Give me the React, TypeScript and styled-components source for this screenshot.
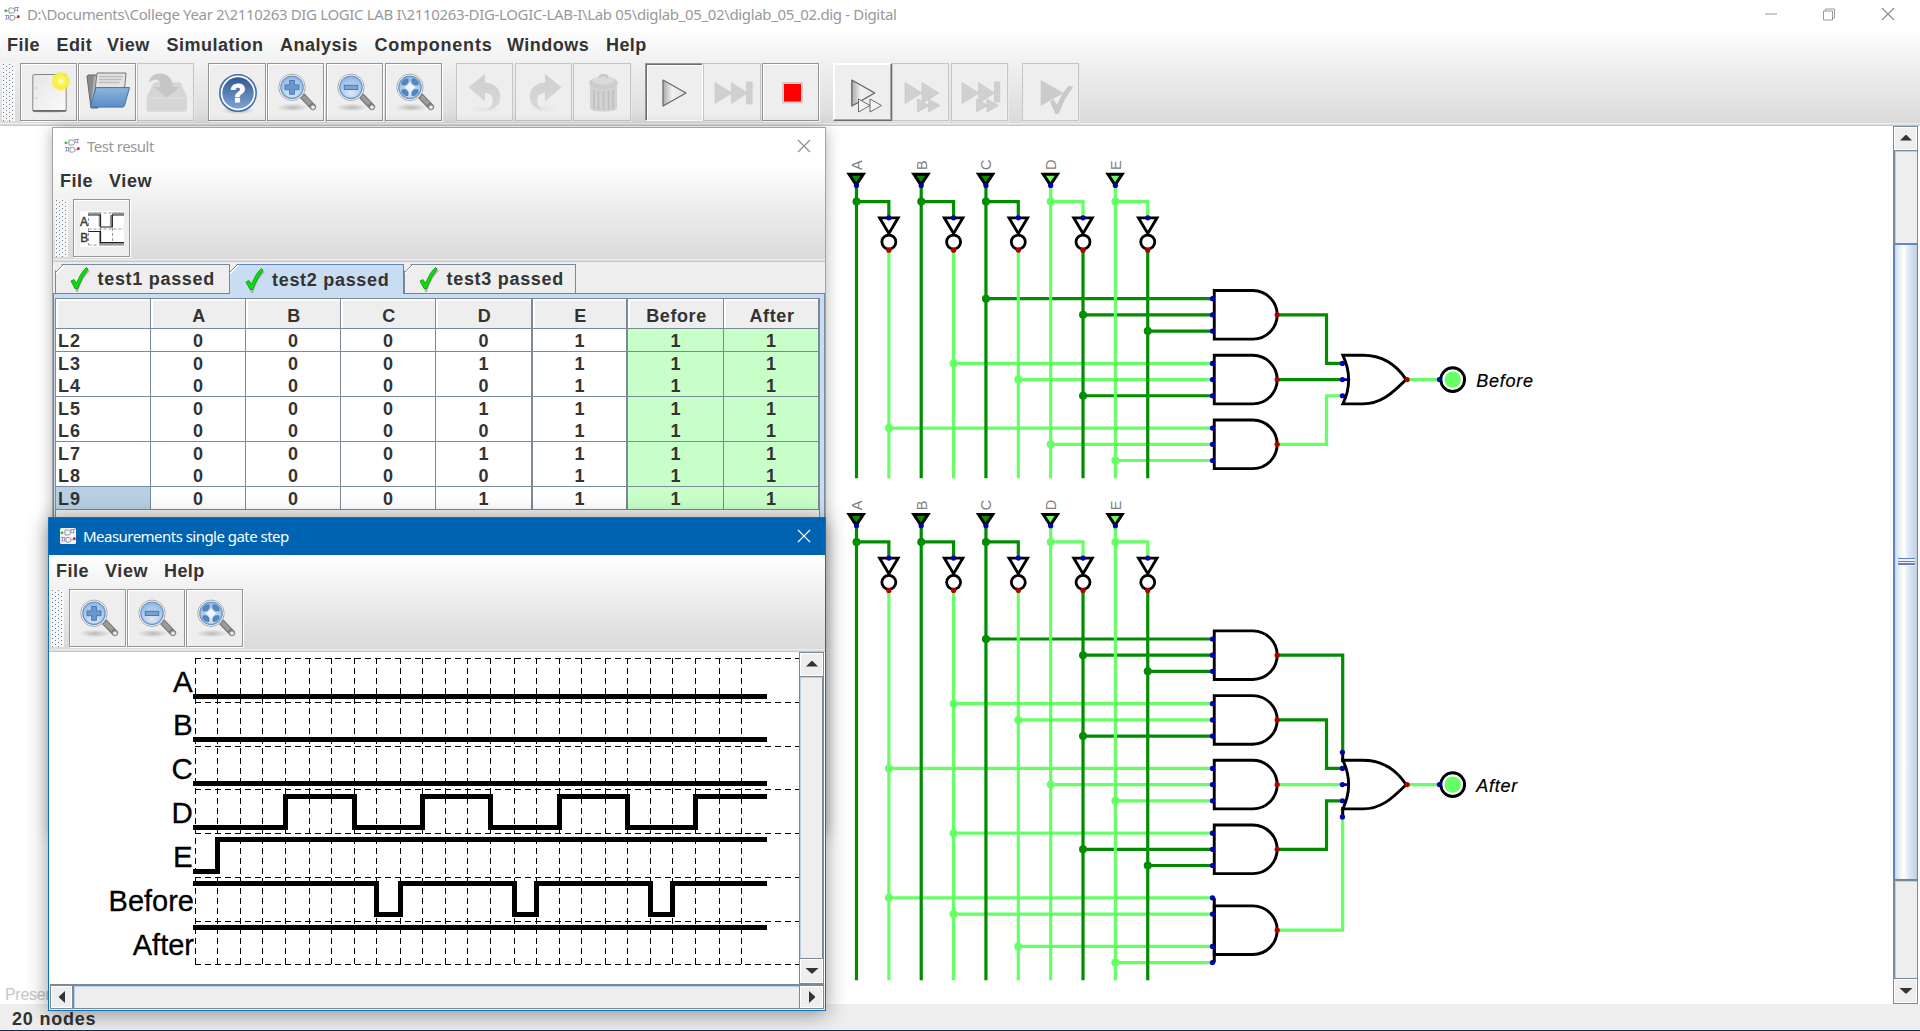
import React from "react";
import styled, { createGlobalStyle, css } from "styled-components";

const GlobalStyle = createGlobalStyle`
  html, body { margin: 0; padding: 0; background: #fff; }
  * { box-sizing: border-box; }
  svg { display: block; flex: none; }
`;

const UI = '"Liberation Sans", Arial, sans-serif';
const TITLE = '"Noto Sans", "Open Sans", sans-serif';
const LINE = "#7a8a99";
const DARK = "#008e00";
const LIGHT = "#66ff66";

const Desktop = styled.div`
  position: relative;
  display: flex;
  flex-direction: column;
  width: 1920px;
  height: 1031px;
  overflow: hidden;
  background: #fff;
  color: #333;
  font: bold 18px ${UI};
`;

const TitleBar = styled.div<{ $h: number; $pad: string; $active?: boolean }>`
  display: flex;
  align-items: center;
  flex: none;
  height: ${(p) => p.$h}px;
  padding: ${(p) => p.$pad};
  background: ${(p) => (p.$active ? "#0063b1" : "#fff")};
  color: ${(p) => (p.$active ? "#fff" : "#999")};
`;

const TitleText = styled.span<{ $ls: number }>`
  flex: 1;
  margin-left: 7px;
  font: 400 15px/20px ${TITLE};
  letter-spacing: ${(p) => p.$ls}px;
  white-space: pre;
`;

const WindowControls = styled.div`
  display: flex;
  gap: 46px;
`;

const Chrome = styled.div<{ $h: number }>`
  display: flex;
  flex-direction: column;
  flex: none;
  height: ${(p) => p.$h}px;
  background: linear-gradient(#fff, #f3f3f3 30%, #dadada);
`;

const ChromeEdge = styled.div`
  flex: none;
  height: 3px;
  background: linear-gradient(#eee 0 1px, #dcdcdc 1px 2px, #c8c8c8 2px 3px);
`;

const MenuBar = styled.div<{ $h: number; $pad: string }>`
  display: flex;
  flex: none;
  height: ${(p) => p.$h}px;
  padding: ${(p) => p.$pad};
`;

const MenuItem = styled.span<{ $w: number; $ls?: number }>`
  flex: none;
  width: ${(p) => p.$w}px;
  line-height: 30px;
  letter-spacing: ${(p) => p.$ls ?? 0.6}px;
  white-space: nowrap;
`;

const ToolBar = styled.div<{ $pad: string }>`
  display: flex;
  flex: none;
  padding: ${(p) => p.$pad};
`;

const Grip = styled.div`
  flex: none;
  width: 13px;
  height: 58px;
  margin-right: 5px;
  background-color: #f6f6f6;
  background-image: radial-gradient(circle at 0.5px 0.5px, #6c7d90 0.8px, transparent 0.9px),
    radial-gradient(circle at 0.5px 0.5px, #6c7d90 0.8px, transparent 0.9px);
  background-size: 6px 4px;
  background-position: 1px 1px, 4px 3px;
`;

const Group = styled.div<{ $w: number }>`
  display: flex;
  flex: none;
  width: ${(p) => p.$w}px;
`;

type Look = "on" | "off" | "pressed" | "raised";
const looks = {
  on: css`
    border: 1px solid #959595;
    box-shadow: inset 1px 1px #fff, 1px 1px #fff;
  `,
  off: css`
    border: 1px solid #c6c6c6;
    box-shadow: 1px 1px #e9e9e9;
  `,
  pressed: css`
    border: 1px solid;
    border-color: #959595 #fff #fff #959595;
    box-shadow: inset 1px 1px #6e6e6e, inset 2px 2px #fff;
  `,
  raised: css`
    border: 1px solid;
    border-color: #fff #6e6e6e #6e6e6e #fff;
    box-shadow: inset -1px -1px #a8a8a8, inset 1px 1px #fff;
  `,
};

const ToolButton = styled.button<{ $look: Look; $w?: number; $after?: number }>`
  display: flex;
  align-items: flex-start;
  justify-content: flex-start;
  flex: none;
  width: ${(p) => p.$w ?? 57}px;
  height: 58px;
  margin: 0 ${(p) => p.$after ?? 1}px 0 0;
  padding: 0;
  background: #eee;
  ${(p) => looks[p.$look]}
  & > svg { margin: -1px; }
`;

const View = styled.div`
  display: flex;
  flex: none;
  height: 878px;
`;

const StatusBar = styled.div`
  flex: none;
  height: 27px;
  padding-left: 12px;
  border-bottom: 1px solid #14304e;
  background: #eee;
  line-height: 30px;
  letter-spacing: 0.8px;
`;

const FloatingWindow = styled.section<{ $x: number; $y: number; $w: number; $h: number; $active?: boolean }>`
  position: absolute;
  left: ${(p) => p.$x}px;
  top: ${(p) => p.$y}px;
  display: flex;
  flex-direction: column;
  width: ${(p) => p.$w}px;
  height: ${(p) => p.$h}px;
  border: 1px solid ${(p) => (p.$active ? "#1170bb" : "#a4a4a4")};
  background: #eee;
  box-shadow: ${(p) => (p.$active ? "0 3px 20px rgba(0,0,0,.42)" : "0 2px 14px rgba(0,0,0,.3)")};
`;

/* ---------- scroll bars ---------- */

const VBar = styled.div`
  display: flex;
  flex-direction: column;
  flex: none;
  width: 25px;
  border: 1px solid ${LINE};
  background: #eee;
`;

const ScrollButton = styled.div<{ $w: number; $h: number }>`
  display: flex;
  align-items: center;
  justify-content: center;
  flex: none;
  width: ${(p) => p.$w}px;
  height: ${(p) => p.$h}px;
  background: #eee;
  box-shadow: inset 1px 1px #fff, inset -1px -1px #fff;
`;

const VTrack = styled.div<{ $h?: number; $thick: "left" | "right" }>`
  flex: ${(p) => (p.$h ? "none" : 1)};
  height: ${(p) => (p.$h ? p.$h + "px" : "auto")};
  border-top: 1px solid ${LINE};
  border-bottom: 1px solid ${LINE};
  border-${(p) => p.$thick}: 1px solid ${LINE};
  box-shadow: inset 1px 1px #b8cfe5;
`;

const Thumb = styled.div`
  display: flex;
  align-items: center;
  justify-content: center;
  flex: none;
  height: 636px;
  margin: 0 -1px;
  border: 1px solid #6382bf;
  border-left-width: 2px;
  background: linear-gradient(90deg, #c8d8ea 0 1px, #dde8f3 2px, #fff 9px, #dde8f3 14px, #bdd1e6);
`;

const ThumbGrip = styled.div`
  width: 17px;
  height: 8px;
  background: repeating-linear-gradient(#6382bf 0 1.4px, #e8f0f8 1.4px 2.7px);
`;

const HBar = styled.div`
  display: flex;
  flex: none;
  width: 774px;
  height: 25px;
  margin-left: 1px;
  border: 1px solid ${LINE};
  border-top-width: 2px;
  background: #eee;
`;

const HTrack = styled.div`
  flex: 1;
  border: solid ${LINE};
  border-width: 0 1px 0 2px;
  box-shadow: inset 1px 1px #b8cfe5;
`;

const arrows = {
  up: "M1 8.5 L6.5 3 H7.5 L13 8.5 Z",
  down: "M0.5 4 H13.5 L7.5 9.5 H6.5 Z",
  left: "M10 1 V13 L4 7.5 V6.5 Z",
  right: "M4 1 V13 L10 7.5 V6.5 Z",
};
const Arrow = ({ dir }: { dir: keyof typeof arrows }) => (
  <svg width="14" height="14" viewBox="0 0 14 14"><path d={arrows[dir]} fill="#333" /></svg>
);

/* ---------- tabs and table ---------- */

const TabRow = styled.div`
  display: flex;
  flex: none;
  height: 31px;
  padding: 2px 0 0 2px;
`;

const Tab = styled.div<{ $w: number; $on?: boolean }>`
  display: flex;
  align-items: center;
  flex: none;
  width: ${(p) => p.$w}px;
  height: ${(p) => (p.$on ? 30 : 29)}px;
  padding-left: ${(p) => (p.$on ? 14.5 : 14)}px;
  border: 1px solid ${(p) => (p.$on ? "#6382bf" : LINE)};
  border-width: 1px 1px 0 ${(p) => (p.$on ? 0 : 1)}px;
  background: linear-gradient(135deg, #eee 0 4.6px, ${(p) => (p.$on ? "#6382bf" : LINE)} 4.6px 5.6px,
    #fff 5.6px 6.6px, ${(p) => (p.$on ? "#c8ddf2" : "#eee")} 6.6px);
  letter-spacing: 0.7px;
  white-space: nowrap;
  clip-path: polygon(0 7px, 7px 0, 100% 0, 100% 100%, 0 100%);
`;

const TabLabel = styled.span`
  margin-left: 7.5px;
  line-height: 30px;
`;

const TabPane = styled.div`
  flex: 1;
  display: flex;
  flex-direction: column;
  padding: 4px 4px 4px 1px;
  border: 1px solid #6382bf;
  border-right-color: ${LINE};
  background: #c8ddf2;
`;

const Table = styled.div`
  flex: 1;
  width: 765px;
  border: solid ${LINE};
  border-width: 1px 0 0 1px;
  background: #eee;
  border-right: 1px solid ${LINE};
`;

const Row = styled.div<{ $h: number }>`
  display: grid;
  grid-template-columns: 95px 95px 95px 95px 97px 95px 96px 95px;
  height: ${(p) => p.$h}px;
`;

const Cell = styled.div<{ $bg?: string; $thick?: boolean; $left?: boolean; $head?: boolean }>`
  display: flex;
  align-items: center;
  justify-content: ${(p) => (p.$left ? "flex-start" : "center")};
  padding: ${(p) => (p.$head ? "5px 0 0 2px" : p.$left ? "2px 0 0 2px" : "2px 0 0")};
  border: solid ${LINE};
  border-width: 0 ${(p) => (p.$thick ? 2 : 1)}px 1px 0;
  background: ${(p) => p.$bg ?? "#fff"};
  box-shadow: ${(p) => (p.$head ? "inset 2px 2px #fff" : "none")};
  letter-spacing: ${(p) => (p.$head ? 0.6 : p.$left ? 1 : 0)}px;
  line-height: 20px;
`;

const MeasureBody = styled.div`
  display: flex;
  flex: none;
  height: 332px;
  background: #fff;
`;

/* ---------- icons ---------- */

const AppIcon = ({ plate }: { plate?: boolean }) => (
  <svg width="16" height="16" viewBox="0 0 16 16" fill="none">
    {plate && <rect width="16" height="16" rx="1.5" fill="#f4f4f6" />}
    <path d="M5 2h3.2a2.3 2.3 0 0 1 0 5H5zM6 9.5h2.8a2.3 2.3 0 0 1 0 4.6H6z" stroke="#9a9aa2" />
    <path d="M1 4.8h4M10.5 4.4h4M1 13h4M10.5 11.8h4" stroke="#aab" />
    <path d="M11 2v3M13.5 1.5v4M2.5 9v4M4.5 9v4" stroke="#9c96d8" />
    <path d="M10.5 1.5h4.5M1 9.5h4" stroke="#999" />
    <circle cx="1.8" cy="4.8" r="1.4" fill="#2cc43c" />
    <circle cx="14.3" cy="10.7" r="1.4" fill="#e60a12" />
  </svg>
);

const CloseIcon = ({ color }: { color: string }) => (
  <svg width="14" height="14" viewBox="0 0 14 14"><path d="M1 1L13 13M13 1L1 13" stroke={color} strokeWidth="1.1" /></svg>
);

const Icon = ({ children }: { children: React.ReactNode }) => (
  <svg width="58" height="58" viewBox="0 0 58 58">{children}</svg>
);

const Defs = () => (
  <svg width="0" height="0" style={{ position: "absolute" }}>
    <defs>
      <radialGradient id="sun"><stop offset="0" stopColor="#fff" /><stop offset=".3" stopColor="#fbf56b" /><stop offset=".75" stopColor="#f7ee3a" /><stop offset="1" stopColor="#f7ee3a" stopOpacity="0" /></radialGradient>
      <linearGradient id="paper" x1="0" y1="0" x2="1" y2="1"><stop offset="0" stopColor="#e6e6e6" /><stop offset="1" stopColor="#fafafa" /></linearGradient>
      <linearGradient id="folder" x1="0" y1="0" x2="0" y2="1"><stop offset="0" stopColor="#8db4dc" /><stop offset="1" stopColor="#5b8dc6" /></linearGradient>
      <linearGradient id="blue" x1="0" y1="0" x2="0" y2="1"><stop offset="0" stopColor="#2f5a98" /><stop offset="1" stopColor="#7fa4d2" /></linearGradient>
      <radialGradient id="lens" cx=".5" cy=".75" r=".8"><stop offset="0" stopColor="#dce9f6" /><stop offset="1" stopColor="#88b2e0" /></radialGradient>
      <radialGradient id="shade"><stop offset="0" stopColor="#000" stopOpacity=".22" /><stop offset="1" stopColor="#000" stopOpacity="0" /></radialGradient>
      <linearGradient id="metal"><stop offset="0" stopColor="#a8aaa6" /><stop offset=".4" stopColor="#f2f3f0" /><stop offset="1" stopColor="#dfe0dc" /></linearGradient>
      <linearGradient id="dim" x1="0" y1="0" x2="0" y2="1"><stop offset="0" stopColor="#cfcfcf" /><stop offset="1" stopColor="#d8d8d8" /></linearGradient>
    </defs>
  </svg>
);

const NewIcon = () => (
  <Icon>
    <ellipse cx="29" cy="48" rx="20" ry="2.5" fill="url(#shade)" />
    <rect x="12.8" y="11.5" width="33.4" height="37" rx="1.5" fill="url(#paper)" stroke="#858585" />
    <path d="M46 47.8H13" stroke="#6b6b6b" strokeWidth="1.4" />
    <circle cx="16.5" cy="25" r="1" fill="#ccc" /><circle cx="16.5" cy="35" r="1" fill="#ccc" />
    <circle cx="40.7" cy="18.3" r="10" fill="url(#sun)" />
  </Icon>
);

const OpenIcon = () => (
  <Icon>
    <path d="M9 13.5l1-1.5h8l2 3v30h-7z" fill="#8a8a8a" stroke="#666" />
    <path d="M13 44l3-31h3l-1 31z" fill="#b5b5b5" />
    <path d="M19 10h29l-1.5 16-31 14z" fill="#e4e4e4" stroke="#777" />
    <path d="M21 13.5h24M21 16.5h23M20.5 19.5h21" stroke="#bdbdbd" strokeWidth="1.4" />
    <path d="M18 24.6H51.5L46.5 42.5q-.4 1.6-2 1.6H13.5q-1.3 0-1-1.2z" fill="url(#folder)" stroke="#3f72b0" />
  </Icon>
);

const SaveIcon = () => (
  <Icon>
    <path d="M18.5 19.3H42q1.5 0 2.3 2L50 34v12.5q0 2.3-2.3 2.3H12q-2.3 0-2.3-2.3V34l6.3-12.7q.8-2 2.5-2z" fill="#d6d6d6" />
    <path d="M10.5 35H49.5" stroke="#dedede" strokeWidth="1.5" />
    <path d="M12 20q1-9.500 11-9.500 11.500 0 13 13.500h7L30 34.500 16.500 24h7q0-7-4.500-7.500-4 0-7 3.500z" fill="#c6c6c6" />
  </Icon>
);

const HelpIcon = () => (
  <Icon>
    <ellipse cx="30" cy="47.5" rx="17" ry="4" fill="url(#shade)" />
    <circle cx="30" cy="30" r="18.2" fill="#fff" stroke="#446ba6" strokeWidth="1.6" />
    <circle cx="30" cy="30" r="15.7" fill="url(#blue)" />
    <text x="30" y="38.5" textAnchor="middle" fontFamily="Liberation Sans, sans-serif" fontWeight="700" fontSize="25" fill="#fff" stroke="#fff" strokeWidth="1.2">?</text>
  </Icon>
);

const ZoomIcon = ({ kind }: { kind: "in" | "out" | "fit" }) => (
  <Icon>
    <ellipse cx="26" cy="44.5" rx="16" ry="4" fill="url(#shade)" />
    <path d="M35.5 33L46 44" stroke="#777" strokeWidth="6.2" strokeLinecap="round" />
    <path d="M36 33.5L43.500 41" stroke="#9b9b98" strokeWidth="4" />
    <circle cx="46" cy="44.2" r="2.300" fill="#eee" stroke="#8a8a8a" />
    <circle cx="25" cy="24.300" r="13.200" fill="#fff" stroke="#a9aaa6" />
    <circle cx="25" cy="24.300" r="11.200" fill="url(#lens)" stroke="#6d97cb" strokeWidth="1.300" />
    {kind === "in" && <path d="M22.600 17.500h4.800v4.400h4.600v4.800h-4.600v4.600h-4.800v-4.600h-4.600v-4.800h4.600z" fill="#6d97cc" stroke="#467ab8" />}
    {kind === "out" && <rect x="18.300" y="22.300" width="13.400" height="4.200" fill="#7ba2d3" stroke="#467ab8" />}
    {kind === "fit" && (
      <g>
        <path d="M17 21.800V19.300Q18.300 17 20.500 16H23V19.500L21 21.800ZM33 21.800V19.300Q31.700 17 29.500 16H27V19.500L29 21.800ZM17 26.800V29.300Q18.300 31.600 20.500 32.600H23V29.100L21 26.800ZM33 26.800V29.300Q31.700 31.600 29.500 32.600H27V29.100L29 26.800Z" fill="#5685c0" stroke="#467ab8" strokeWidth=".8" />
        <path d="M25 18.800l2 3 3.500 2.500-3.500 2.500-2 3-2-3-3.500-2.500 3.500-2.500z" fill="#eef5fc" />
      </g>
    )}
  </Icon>
);

const UndoIcon = ({ flip }: { flip?: boolean }) => (
  <Icon>
    <ellipse cx="29" cy="46" rx="16" ry="4" fill="url(#shade)" opacity=".2" />
    <g transform={flip ? "translate(59 0) scale(-1 1)" : undefined}>
      <path d="M12.6 24.3L29 11v8.5Q44.5 21 44.3 35 43.5 45 31 47.2 38 42 36.5 35.5 35.5 30 29 30v8.7z" fill="url(#dim)" />
    </g>
  </Icon>
);

const TrashIcon = () => (
  <Icon>
    <path d="M17 23V45q0 3.5 13.5 3.5T44 45V23z" fill="#d2d2d2" />
    <path d="M21 27v19M25.5 28v19M30.5 28v19M35.5 28v19M40 27v19" stroke="#bfbfbf" strokeWidth="1.6" />
    <ellipse cx="30.5" cy="20" rx="14.3" ry="6.5" fill="#cdcdcd" />
    <ellipse cx="30.5" cy="17.5" rx="11" ry="4" fill="#dadada" />
    <path d="M26.5 15q0-3 4-3t4 3" fill="none" stroke="#c4c4c4" strokeWidth="2" />
  </Icon>
);

const tri = (x: number, y: number, w: number, h: number) => `M${x} ${y}L${x + w} ${y + h / 2}L${x} ${y + h}Z`;

const PlayIcon = () => (
  <Icon><path d={tri(18, 17, 23, 26)} fill="url(#metal)" stroke="#666" strokeWidth="1.2" strokeLinejoin="round" /></Icon>
);
const StepIcon = () => (
  <Icon><path d={tri(12, 19.5, 17, 21) + tri(28.5, 19.5, 16, 21) + "M43.5 19h5.7v22h-5.7z"} fill="#d0d0d0" stroke="#c6c6c6" strokeWidth=".6" /></Icon>
);
const StopIcon = () => (
  <Icon><rect x="21" y="20" width="19" height="19.5" fill="red" stroke="#d2cdcd" strokeWidth="2" /></Icon>
);
const FastIcon = () => (
  <Icon>
    <g fill="url(#metal)" stroke="#5f5f5f" strokeLinejoin="round">
      <path d={tri(18.8, 17, 23, 26)} strokeWidth="1.2" />
      <path d={tri(25.5, 36, 11.5, 13) + tri(37, 36, 11.5, 13)} fill="#f3f3f1" strokeWidth=".9" />
    </g>
  </Icon>
);
const NextIcon = () => (
  <Icon>
    <g fill="#d0d0d0" stroke="#c4c4c4" strokeWidth=".6">
      <path d={tri(13, 19.5, 17, 21) + tri(30, 19.5, 17, 21)} />
      <path d={tri(25.5, 36, 11.5, 13) + tri(36.5, 36, 11.5, 13)} />
    </g>
  </Icon>
);
const EndIcon = () => (
  <Icon>
    <g fill="#d0d0d0" stroke="#c4c4c4" strokeWidth=".6">
      <path d={tri(11, 19.5, 17, 21) + tri(27.5, 19.5, 16, 21) + "M43.5 19h5.3v20h-5.3z"} />
      <path d={tri(25.5, 36, 11.5, 13) + tri(36, 36, 11.5, 13)} />
    </g>
  </Icon>
);
const CheckRunIcon = () => (
  <Icon>
    <path d={tri(18.7, 17, 23, 26)} fill="#cbcbcb" />
    <path d="M28.5 38.5l3-1.5 3.5 5.5q5-12 12-19.5l3.5 1.5Q42.5 34 36.5 50.5h-3z" fill="#c9c9c9" stroke="#bdbdbd" strokeWidth=".6" />
  </Icon>
);

const WaveIcon = () => (
  <Icon>
    <rect x="7" y="12" width="44" height="36" fill="#fff" />
    <path d="M15.5 14H51M15.5 30H51M15.5 46H51M39.5 14V46M15.5 14v32M27.5 14v32" stroke="#999" strokeDasharray="3 2" fill="none" />
    <path d="M15.5 14.5H27.8M39 14.5H51M26.7 16V27.5M38 16V27.5M27 32.5V45M27 45.3H51" stroke="#9c9c9c" strokeWidth="2.2" fill="none" />
    <path d="M15.3 16H27.5V28H39.3V16H51M15.3 32.5H27.5V43.7H51" stroke="#222" strokeWidth="1.2" fill="none" />
    <g fontFamily="Liberation Sans, sans-serif" fontSize="12" fontWeight="400" fill="#333" stroke="#333" strokeWidth=".4"><text x="7" y="26.5">A</text><text x="7.2" y="42.5">B</text></g>
  </Icon>
);

const PassIcon = () => (
  <svg width="20" height="26" viewBox="0 0 20 26">
    <path d="M3 15.5q2 2 3.3 6Q10 10 17.5 3" fill="none" stroke="#777" strokeWidth="4" opacity=".5" transform="translate(.8 .8)" />
    <path d="M1 15l3-1.5 2.5 4Q11 6 16.5 1.5L18 3Q12 11 7.6 22.5H5z" fill="#0be00b" stroke="#079507" strokeWidth=".8" />
  </svg>
);

/* ---------- circuit ---------- */

const U = 16.18;
const X = (n: number) => 856.5 + n * U;

type Wire = [row: number, col: number];
const isDark = (col: number) => [0, 4, 8, 14, 18].includes(col);
const tone = (dark: boolean) => (dark ? DARK : LIGHT);

const Pin = ({ x, y, out }: { x: number; y: number; out?: boolean }) => (
  <circle cx={x} cy={y} r="2.6" fill={out ? "#b20000" : "#0000b2"} />
);

interface CircuitProps {
  top: number;
  end: number;
  taps: Wire[];
  gates: { row: number; pins: number[]; dark: boolean; via?: number; to: number }[];
  orRow: number;
  wide?: boolean;
  label: string;
}

const Circuit = ({ top, end, taps, gates, orRow, wide, label }: CircuitProps) => {
  const Y = (n: number) => top + n * U;
  const oy = Y(orRow);
  return (
    <g fill="none" strokeWidth="3.2">
      {taps.map(([r, c], i) => (
        <path key={i} d={`M${X(c)} ${Y(r)}H${X(22)}`} stroke={tone(isDark(c))} />
      ))}
      {gates.map((g, i) => (
        <path key={i} d={`M${X(26)} ${Y(g.row)}${g.via ? `H${X(g.via) + 0.8}V${Y(g.to)}` : ""}${g.via === 30 ? "" : `H${X(30)}`}`} stroke={tone(g.dark)} />
      ))}
      <path d={`M${X(34)} ${oy}H${X(36)}`} stroke={LIGHT} />
      {["A", "B", "C", "D", "E"].map((name, i) => {
        const x = X(i * 4);
        const nx = X(i * 4 + 2);
        const low = i < 3;
        return (
          <g key={name}>
            <path d={`M${x} ${Y(-1)}V${Y(end)}M${x} ${Y(0)}H${nx}V${Y(1)}`} stroke={tone(low)} strokeLinecap="square" />
            <path d={`M${nx} ${Y(3)}V${Y(end)}`} stroke={tone(!low)} strokeLinecap="square" />
            <path d={`M${x - 7.4} ${Y(-1) - 11.2}H${x + 6.8}L${x - 0.3} ${Y(-1) - 0.5}Z`} fill={tone(low)} stroke="#000" strokeWidth="3" />
            <path d={`M${nx - 9.3} ${Y(1)}H${nx + 9.3}L${nx} ${Y(2) - 0.5}Z`} fill="#fff" stroke="#000" strokeWidth="2.8" />
            <circle cx={nx} cy={Y(2.5)} r="7" fill="#fff" stroke="#000" strokeWidth="2.8" />
            <circle cx={x} cy={Y(0)} r="4" fill={tone(low)} />
            <Pin x={x} y={Y(-1)} />
            <Pin x={nx} y={Y(1)} />
            <Pin x={nx} y={Y(3)} out />
            <text transform={`translate(${x + 5.3} ${Y(-1) - 15.4}) rotate(-90)`} fill="#808080" fontFamily="Liberation Sans, sans-serif" fontWeight="400" fontSize="14.5">{name}</text>
          </g>
        );
      })}
      {taps.map(([r, c], i) => (
        <circle key={i} cx={X(c)} cy={Y(r)} r="4" fill={tone(isDark(c))} />
      ))}
      {gates.map((g, i) => {
        const y = Y(g.row);
        const x = X(22) + 1.8;
        return (
          <g key={i}>
            <path d={`M${x} ${y - 24.3}H${X(24.5)}C${X(24.5) + 13.4} ${y - 24.3} ${X(26)} ${y - 13.4} ${X(26)} ${y}C${X(26)} ${y + 13.4} ${X(24.5) + 13.4} ${y + 24.3} ${X(24.5)} ${y + 24.3}H${x}Z`} stroke="#000" strokeWidth="2.9" />
            {g.pins.length > 3 && <path d={`M${x} ${y - 2 * U}V${y + 2 * U}`} stroke="#000" strokeWidth="3" />}
            {g.pins.map((p) => <Pin key={p} x={X(22)} y={Y(p)} />)}
            <Pin x={X(26)} y={y} out />
          </g>
        );
      })}
      <path d={`M${X(30)} ${oy}h7M${X(30)} ${oy - U}h4M${X(30)} ${oy + U}h4`} stroke="#0000b2" strokeWidth="2.6" />
      <path d={`M${X(30) + 1} ${oy - 24.3}H${X(31.3)}C${X(32.5)} ${oy - 24.3} ${X(33.4)} ${oy - 14} ${X(34) - 0.5} ${oy}C${X(33.2)} ${oy + 12} ${X(32.5)} ${oy + 24.3} ${X(31.3)} ${oy + 24.3}H${X(30) + 1}Q${X(30) + 12.5} ${oy} ${X(30) + 1} ${oy - 24.3}Z`} stroke="#000" strokeWidth="2.9" />
      {wide && <path d={`M${X(30) + 0.8} ${oy - 2 * U}v10M${X(30) + 0.8} ${oy + 2 * U}v-10`} stroke="#000" strokeWidth="3" />}
      {(wide ? [-2, -1, 0, 1, 2] : [-1, 0, 1]).map((p) => <Pin key={p} x={X(30) + 0.5} y={oy + p * U} />)}
      <Pin x={X(34) + 0.5} y={oy} out />
      <circle cx="1452.7" cy={oy} r="11.9" fill="#fff" stroke="#000" strokeWidth="2.9" />
      <circle cx="1452.7" cy={oy} r="8.2" fill={LIGHT} />
      <Pin x={X(36) + 0.5} y={oy} />
      <text x="1476.3" y={oy + 7.6} fill="#000" stroke="#000" strokeWidth=".2" fontFamily="Liberation Sans, sans-serif" fontStyle="italic" fontWeight="400" fontSize="18" letterSpacing=".75">{label}</text>
    </g>
  );
};

const baseTaps: Wire[] = [[6, 8], [7, 14], [8, 18], [10, 6], [11, 10], [12, 14], [14, 2], [15, 12], [16, 16]];

const Schematic = () => (
  <svg width="1893" height="878" viewBox="0 126 1893 878">
    <text x="5" y="1000" fill="#c6c6c6" fontFamily="Liberation Sans, sans-serif" fontWeight="400" fontSize="16" letterSpacing="-.3">Present</text>
    <Circuit
      top={201.6}
      end={17}
      taps={baseTaps}
      gates={[
        { row: 7, pins: [6, 7, 8], dark: true, via: 29, to: 10 },
        { row: 11, pins: [10, 11, 12], dark: true, to: 11 },
        { row: 15, pins: [14, 15, 16], dark: false, via: 29, to: 12 },
      ]}
      orRow={11}
      label="Before"
    />
    <Circuit
      top={541.9}
      end={27}
      taps={[...baseTaps, [18, 6], [19, 14], [20, 18], [22, 2], [23, 6], [25, 10], [26, 16]]}
      gates={[
        { row: 7, pins: [6, 7, 8], dark: true, via: 30, to: 13 },
        { row: 11, pins: [10, 11, 12], dark: true, via: 29, to: 14 },
        { row: 15, pins: [14, 15, 16], dark: false, to: 15 },
        { row: 19, pins: [18, 19, 20], dark: true, via: 29, to: 16 },
        { row: 24, pins: [22, 23, 25, 26], dark: false, via: 30, to: 17 },
      ]}
      orRow={15}
      wide
      label="After"
    />
  </svg>
);

/* ---------- timing chart ---------- */

const gridX = [195, 217, 240, 262, 285, 309, 331, 354, 376, 400, 422, 445, 467, 490, 514, 536, 559, 581, 605, 627, 650, 672, 695, 719, 741];
const gridY = [658, 702, 746, 789, 833, 877, 921, 964];
const signals = [
  { name: "A", base: 691.5, d: "M193 696.5H767" },
  { name: "B", base: 735, d: "M193 739.5H767" },
  { name: "C", base: 779, d: "M193 783.5H767" },
  { name: "D", base: 822.5, d: "M193 827.5H285.5V796.5H354.5V827.5H422.5V796.5H490.5V827.5H559.5V796.5H627.5V827.5H695.5V796.5H767" },
  { name: "E", base: 866.5, d: "M193 871.5H217.5V839.5H767" },
  { name: "Before", base: 910.5, d: "M193 883.5H376.5V914.5H400.5V883.5H514.5V914.5H536.5V883.5H650.5V914.5H672.5V883.5H767" },
  { name: "After", base: 954.5, d: "M193 927.5H767" },
];

const Chart = () => (
  <svg width="750" height="332" viewBox="49 652 750 332" shapeRendering="crispEdges">
    <g stroke="#000" strokeDasharray="6 4">
      {gridX.map((x) => <path key={x} d={`M${x + 0.5} 658V965`} />)}
      {gridY.map((y) => <path key={y} d={`M195 ${y + 0.5}H799`} />)}
    </g>
    {signals.map((s) => (
      <g key={s.name}>
        <path d={s.d} fill="none" stroke="#000" strokeWidth="5" />
        <text x={s.name.length > 1 ? 194 : 192.8} y={s.base} textAnchor="end" fill="#000" stroke="#000" strokeWidth=".3" fontFamily="Liberation Sans, sans-serif" fontWeight="400" fontSize={s.name.length > 1 ? 29 : 29.5}>{s.name}</text>
      </g>
    ))}
  </svg>
);

/* ---------- data ---------- */

const mainMenu: [string, number, number][] = [
  ["File", 49.5, 0.5], ["Edit", 50.5, 0.4], ["View", 59.5, 0.5], ["Simulation", 113.5, 0.5],
  ["Analysis", 94.5, 0.5], ["Components", 132.5, 0.8], ["Windows", 99, 0.5], ["Help", 50, 0.4],
];

type Tool = [look: Look, icon: React.ReactNode, width: number, after: number];
const toolGroups: { w: number; items: Tool[] }[] = [
  { w: 188, items: [["on", <NewIcon />, 57, 1], ["on", <OpenIcon />, 58, 1], ["off", <SaveIcon />, 57, 0]] },
  { w: 248, items: [["on", <HelpIcon />, 58, 1], ["on", <ZoomIcon kind="in" />, 57, 2], ["on", <ZoomIcon kind="out" />, 57, 2], ["on", <ZoomIcon kind="fit" />, 57, 0]] },
  { w: 189, items: [["off", <UndoIcon />, 57, 2], ["off", <UndoIcon flip />, 57, 1], ["off", <TrashIcon />, 58, 0]] },
  { w: 188, items: [["pressed", <PlayIcon />, 58, 0], ["off", <StepIcon />, 58, 1], ["on", <StopIcon />, 57, 0]] },
  { w: 189, items: [["raised", <FastIcon />, 59, 0], ["off", <NextIcon />, 57, 2], ["off", <EndIcon />, 57, 0]] },
  { w: 60, items: [["off", <CheckRunIcon />, 57, 0]] },
];

const rows = ["L2", "L3", "L4", "L5", "L6", "L7", "L8", "L9"].map((name, i) => ({
  name,
  values: ["0", "0", "0", String(i % 2), "1", "1", "1"],
}));

export default function App() {
  return (
    <Desktop>
      <GlobalStyle />
      <Defs />
      <TitleBar $h={29} $pad="0 25px 2px 4px">
        <AppIcon />
        <TitleText $ls={-0.345}>{"D:\\Documents\\College Year 2\\2110263 DIG LOGIC LAB I\\2110263-DIG-LOGIC-LAB-I\\Lab 05\\diglab_05_02\\diglab_05_02.dig - Digital"}</TitleText>
        <WindowControls>
          <svg width="12" height="14" viewBox="0 0 12 14"><path d="M0 7H12" stroke="#999" /></svg>
          <svg width="12" height="14" viewBox="0 0 12 14" fill="none" stroke="#999"><path d="M.5 4h9v9h-9zM2.5 4v-2h9v9h-2" /></svg>
          <CloseIcon color="#8c8c8c" />
        </WindowControls>
      </TitleBar>
      <Chrome $h={94}>
        <MenuBar $h={34} $pad="1px 0 0 7px">
          {mainMenu.map(([t, w, ls]) => <MenuItem key={t} $w={w} $ls={ls}>{t}</MenuItem>)}
        </MenuBar>
        <ToolBar $pad="0 0 0 2px">
          <Grip />
          {toolGroups.map((g, i) => (
            <Group key={i} $w={g.w}>
              {g.items.map(([look, icon, w, after], k) => (
                <ToolButton key={k} $look={look} $w={w} $after={after}>{icon}</ToolButton>
              ))}
            </Group>
          ))}
        </ToolBar>
      </Chrome>
      <ChromeEdge />
      <View>
        <Schematic />
        <VBar>
          <ScrollButton $w={23} $h={23}><Arrow dir="up" /></ScrollButton>
          <VTrack $h={94} $thick="left" />
          <Thumb><ThumbGrip /></Thumb>
          <VTrack $thick="left" />
          <ScrollButton $w={23} $h={24}><Arrow dir="down" /></ScrollButton>
        </VBar>
      </View>
      <StatusBar>20 nodes</StatusBar>

      <FloatingWindow $x={52} $y={127} $w={774} $h={705}>
        <TitleBar $h={37} $pad="0 14px 2px 11px">
          <AppIcon />
          <TitleText $ls={-0.5}>Test result</TitleText>
          <CloseIcon color="#8c8c8c" />
        </TitleBar>
        <Chrome $h={94}>
          <MenuBar $h={34} $pad="1px 0 0 7px">
            <MenuItem $w={49} $ls={0.5}>File</MenuItem>
            <MenuItem $w={60} $ls={0.6}>View</MenuItem>
          </MenuBar>
          <ToolBar $pad="0 0 0 2px">
            <Grip />
            <ToolButton $look="on"><WaveIcon /></ToolButton>
          </ToolBar>
        </Chrome>
        <ChromeEdge />
        <TabRow>
          <Tab $w={175}><PassIcon /><TabLabel>test1 passed</TabLabel></Tab>
          <Tab $w={174} $on><PassIcon /><TabLabel>test2 passed</TabLabel></Tab>
          <Tab $w={172}><PassIcon /><TabLabel>test3 passed</TabLabel></Tab>
        </TabRow>
        <TabPane>
          <Table>
            <Row $h={30}>
              {["", "A", "B", "C", "D", "E", "Before", "After"].map((h, i) => (
                <Cell key={i} $head $bg="#eee" $thick={i === 4 || i === 5}>{h}</Cell>
              ))}
            </Row>
            {rows.map((r, i) => (
              <Row key={r.name} $h={i % 2 ? 22 : 23}>
                <Cell $left $bg={r.name === "L9" ? "#b8cfe5" : "#fff"}>{r.name}</Cell>
                {r.values.map((v, k) => (
                  <Cell key={k} $bg={k > 4 ? "#c8ffc8" : "#fff"} $thick={k === 3 || k === 4}>{v}</Cell>
                ))}
              </Row>
            ))}
          </Table>
        </TabPane>
      </FloatingWindow>

      <FloatingWindow $x={48} $y={517} $w={778} $h={494} $active>
        <TitleBar $h={37} $pad="0 14px 1px 11px" $active>
          <AppIcon plate />
          <TitleText $ls={-0.53}>Measurements single gate step</TitleText>
          <CloseIcon color="#fff" />
        </TitleBar>
        <Chrome $h={94}>
          <MenuBar $h={34} $pad="1px 0 0 7px">
            <MenuItem $w={49} $ls={0.5}>File</MenuItem>
            <MenuItem $w={59} $ls={0.6}>View</MenuItem>
            <MenuItem $w={50} $ls={0.4}>Help</MenuItem>
          </MenuBar>
          <ToolBar $pad="0 0 0 2px">
            <Grip />
            <Group $w={180}>
              <ToolButton $look="on"><ZoomIcon kind="in" /></ToolButton>
              <ToolButton $look="on" $w={58}><ZoomIcon kind="out" /></ToolButton>
              <ToolButton $look="on"><ZoomIcon kind="fit" /></ToolButton>
            </Group>
          </ToolBar>
        </Chrome>
        <ChromeEdge />
        <MeasureBody>
          <Chart />
          <VBar>
            <ScrollButton $w={23} $h={23}><Arrow dir="up" /></ScrollButton>
            <VTrack $thick="right" />
            <ScrollButton $w={23} $h={24}><Arrow dir="down" /></ScrollButton>
          </VBar>
        </MeasureBody>
        <HBar>
          <ScrollButton $w={21} $h={22}><Arrow dir="left" /></ScrollButton>
          <HTrack />
          <ScrollButton $w={23} $h={22}><Arrow dir="right" /></ScrollButton>
        </HBar>
      </FloatingWindow>
    </Desktop>
  );
}
